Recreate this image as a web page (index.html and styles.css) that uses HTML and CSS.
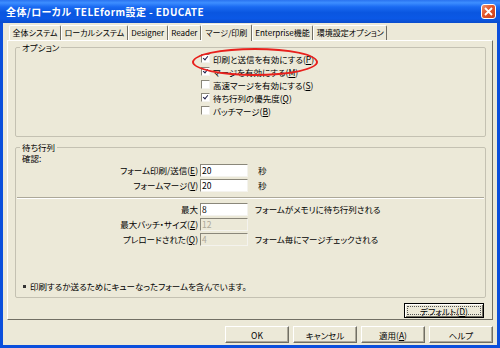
FILE: index.html
```html
<!DOCTYPE html>
<html lang="ja">
<head>
  <meta charset="UTF-8" />
  <title>全体/ローカル TELEform設定 - EDUCATE</title>
  <link rel="stylesheet" href="styles.css">
</head>
<body>
  <div class="window">
    <div class="titlebar">
      <span class="title">全体/ローカル TELEform設定 - EDUCATE</span>
      <span class="close">
        <svg width="9" height="9" viewBox="0 0 9 9"><path d="M1 1L8 8M8 1L1 8" stroke="#fff" stroke-width="1.8"/></svg>
      </span>
    </div>
    <div class="client">
      <div class="tabs">
        <span class="tab">全体システム</span>
        <span class="tab">ローカルシステム</span>
        <span class="tab">Designer</span>
        <span class="tab">Reader</span>
        <span class="tab active">マージ/印刷</span>
        <span class="tab">Enterprise機能</span>
        <span class="tab">環境設定オプション</span>
      </div>
      <div class="panel">
        <fieldset class="group options">
          <legend>オプション</legend>
          <div class="checks">
            <div class="check"><span class="box on"></span>印刷と送信を有効にする(<u>P</u>)</div>
            <div class="check"><span class="box on"></span>マージを有効にする(<u>M</u>)</div>
            <div class="check"><span class="box"></span>高速マージを有効にする(<u>S</u>)</div>
            <div class="check"><span class="box on"></span>待ち行列の優先度(<u>Q</u>)</div>
            <div class="check"><span class="box"></span>バッチマージ(<u>B</u>)</div>
          </div>
        </fieldset>
        <span class="ring"></span>

        <fieldset class="group queue">
          <legend>待ち行列</legend>
          <div class="note">確認:</div>
          <div class="field">
            <span class="lbl">フォーム印刷/送信(<u>E</u>)</span><span class="input">20</span><span class="unit">秒</span>
          </div>
          <div class="field">
            <span class="lbl">フォームマージ(<u>V</u>)</span><span class="input">20</span><span class="unit">秒</span>
          </div>
          <div class="sep"></div>
          <div class="field">
            <span class="lbl">最大</span><span class="input">8</span><span class="after">フォームがメモリに待ち行列される</span>
          </div>
          <div class="field">
            <span class="lbl">最大バッチ・サイズ(<u>Z</u>)</span><span class="input off">12</span>
          </div>
          <div class="field">
            <span class="lbl">プレロードされた(<u>Q</u>)</span><span class="input off">4</span><span class="after">フォーム毎にマージチェックされる</span>
          </div>
          <p class="foot"><span class="bullet"></span>印刷するか送るためにキューなったフォームを含んでいます。</p>
        </fieldset>

        <div class="panel-actions">
          <button class="btn focus">デフォルト(<u>D</u>)</button>
        </div>
      </div>
      <div class="actions">
        <button class="btn">OK</button>
        <button class="btn">キャンセル</button>
        <button class="btn">適用(<u>A</u>)</button>
        <button class="btn">ヘルプ</button>
      </div>
    </div>
  </div>
</body>
</html>
```

FILE: styles.css
```css
body {
  margin: 0;
  font-family: "Noto Sans CJK JP", sans-serif;
  font-size: 8.5px;
  line-height: 10px;
  font-feature-settings: "palt";
  color: #000;
}
.window {
  width: 500px;
  height: 348px;
  display: flex;
  flex-direction: column;
  background: #0b4fdc;
}
.titlebar {
  height: 23px;
  flex: none;
  display: flex;
  align-items: center;
  justify-content: space-between;
  padding: 0 4px 0 6px;
  box-sizing: border-box;
  background: linear-gradient(#2a73f0 0%, #3d8eff 12%, #1a6af2 30%, #0a56e0 55%, #0b58e6 80%, #0a4ccc 100%);
}
.title {
  color: #fff;
  font-weight: bold;
  font-size: 10px;
  letter-spacing: 0.4px;
}
.close {
  width: 15px;
  height: 15px;
  box-sizing: border-box;
  border: 1px solid #fff;
  border-radius: 3px;
  background: linear-gradient(135deg, #f0926e 0%, #e2552a 45%, #c8401c 100%);
  display: flex;
  align-items: center;
  justify-content: center;
}
.client {
  flex: 1;
  margin: 0 3px 3px 3px;
  padding: 0 4px;
  background: #ece9d8;
  display: flex;
  flex-direction: column;
}
.tabs {
  height: 17px;
  display: flex;
  align-items: flex-end;
  padding-left: 2px;
}
.tab {
  height: 15px;
  box-sizing: border-box;
  padding: 2px 2.5px 0 2.5px;
  font-size: 8px;
  white-space: nowrap;
  border-top: 1px solid #fff;
  border-left: 1px solid #fff;
  border-right: 1px solid #716f64;
  border-radius: 2px 2px 0 0;
}
.tab.active {
  height: 17px;
  padding: 3px 3.5px 0 3.5px;
  margin-bottom: -1px;
  background: #ece9d8;
  position: relative;
  z-index: 1;
}
.panel {
  position: relative;
  height: 280px;
  box-sizing: border-box;
  border: 1px solid;
  border-color: #fff #716f64 #716f64 #fff;
  padding: 1px 6px 0 7px;
}
.group {
  margin: 0;
  padding: 0;
  min-width: 0;
  border: 1px solid #c4c1b2;
  border-radius: 2px;
}
.group legend {
  margin-left: 4px;
  padding: 0 2px;
  line-height: 10px;
}
.checks {
  padding: 0 0 19px 185px;
}
.check {
  height: 13px;
  display: flex;
  align-items: center;
}
.box {
  width: 9px;
  height: 9px;
  box-sizing: border-box;
  background: #fff;
  border: 1px solid;
  border-color: #8a877a #f4f3ee #f4f3ee #8a877a;
  margin-right: 3px;
  position: relative;
}
.box.on::after {
  content: "";
  position: absolute;
  left: 2px;
  top: 0px;
  width: 2px;
  height: 4px;
  border: solid #21214a;
  border-width: 0 1.5px 1.5px 0;
  transform: rotate(40deg);
}
.ring {
  position: absolute;
  left: 184px;
  top: 7px;
  width: 126px;
  height: 28px;
  box-sizing: border-box;
  border: 2px solid #e8201c;
  border-radius: 50%;
}
.queue {
  margin-top: 5px;
  padding: 0 0 6px 0;
}
.note {
  padding: 1px 0 0 6px;
  line-height: 11px;
}
.field {
  height: 15px;
  display: flex;
  align-items: flex-start;
}
.lbl {
  width: 184px;
  box-sizing: border-box;
  padding-right: 2px;
  text-align: right;
  line-height: 13px;
  white-space: nowrap;
}
.input {
  width: 48px;
  height: 13px;
  box-sizing: border-box;
  background: #fff;
  border: 1px solid;
  border-color: #8a877a #f4f3ee #f4f3ee #8a877a;
  padding-left: 1px;
  line-height: 11px;
}
.input.off {
  background: #ece9d8;
  color: #aca899;
}
.unit {
  margin-left: 10px;
  line-height: 13px;
}
.after {
  margin-left: 7px;
  line-height: 13px;
}
.sep {
  margin: 3px 1px 4px 1px;
  border-top: 1px solid #aca899;
  border-bottom: 1px solid #fff;
}
.foot {
  margin: 33px 0 0 0;
  padding-left: 7px;
  display: flex;
  align-items: center;
}
.bullet {
  width: 3px;
  height: 3px;
  background: #333;
  margin-right: 4px;
}
.panel-actions {
  display: flex;
  justify-content: flex-end;
  margin-top: 5px;
  padding-right: 2px;
}
.btn {
  font-family: inherit;
  font-size: 8.5px;
  font-feature-settings: "palt";
  line-height: 10px;
  color: #000;
  background: #ece9d8;
  border: 1px solid;
  border-color: #fff #716f64 #716f64 #fff;
  box-shadow: inset -1px -1px #aca899;
  padding: 0;
  margin: 0;
  height: 17px;
  width: 64px;
}
.btn.focus {
  width: 80px;
  height: 15px;
  border: 1px solid #000;
  box-shadow: inset 1px 1px #fff, inset -1px -1px #716f64;
  outline: 1px dotted #555;
  outline-offset: -4px;
}
.actions {
  display: flex;
  justify-content: flex-end;
  gap: 4px;
  margin-top: 6px;
}
```
